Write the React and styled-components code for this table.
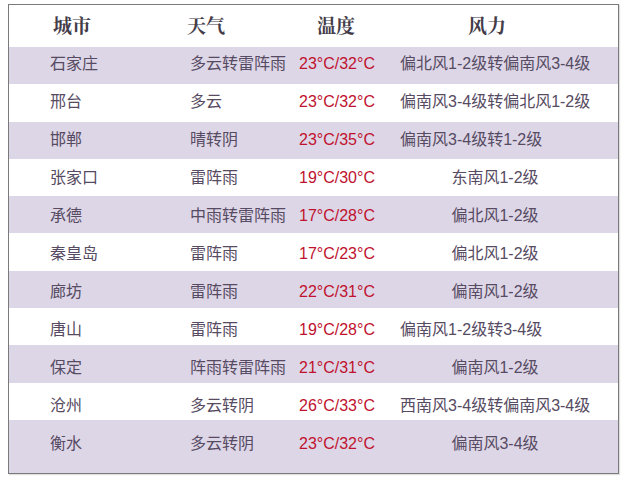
import React from 'react';
import styled, { createGlobalStyle } from 'styled-components';

// wind text is left-aligned when long, centred when short (as in the source sheet)
const rows = [
  ['石家庄', '多云转雷阵雨', '23°C/32°C', '偏北风1-2级转偏南风3-4级', true],
  ['邢台', '多云', '23°C/32°C', '偏南风3-4级转偏北风1-2级', true],
  ['邯郸', '晴转阴', '23°C/35°C', '偏南风3-4级转1-2级', true],
  ['张家口', '雷阵雨', '19°C/30°C', '东南风1-2级'],
  ['承德', '中雨转雷阵雨', '17°C/28°C', '偏北风1-2级'],
  ['秦皇岛', '雷阵雨', '17°C/23°C', '偏北风1-2级'],
  ['廊坊', '雷阵雨', '22°C/31°C', '偏南风1-2级'],
  ['唐山', '雷阵雨', '19°C/28°C', '偏南风1-2级转3-4级', true],
  ['保定', '阵雨转雷阵雨', '21°C/31°C', '偏南风1-2级'],
  ['沧州', '多云转阴', '26°C/33°C', '西南风3-4级转偏南风3-4级', true],
  ['衡水', '多云转阴', '23°C/32°C', '偏南风3-4级'],
];

const GlobalStyle = createGlobalStyle`
  html, body {
    margin: 0;
    padding: 0;
    background: #fff;
  }
  body {
    font-family: "Liberation Sans", "Noto Sans CJK SC", sans-serif;
  }
`;

const Page = styled.div`
  padding: 4px 7px 6px 8px;
`;

const Table = styled.div`
  border: 1px solid #7a7a7a;
  display: grid;
  grid-template-columns: 181px 109px 100px 1fr;
  box-shadow: 1px 1px 1px rgba(0, 0, 0, 0.12);
`;

const Row = styled.div`
  display: contents;
`;

// the text in the sheet drifts slightly lower in each row, so the top
// padding is passed in per row
const Cell = styled.div`
  height: ${(p) => (p.last ? '53px' : '37.3px')};
  padding-top: ${(p) => p.top}px;
  box-sizing: border-box;
  display: flex;
  align-items: flex-start;
  justify-content: ${(p) => (p.center ? 'center' : 'flex-start')};
  padding-left: ${(p) => p.indent || '0'};
  padding-right: ${(p) => p.pr || '0'};
  background: ${(p) => (p.stripe ? '#ddd6e7' : '#fff')};
  color: #564b62;
  font-size: 16px;
  line-height: 20px;
  white-space: nowrap;
`;

const HeadCell = styled.div`
  height: 42px;
  box-sizing: border-box;
  display: flex;
  align-items: center;
  justify-content: ${(p) => (p.center ? 'center' : 'flex-start')};
  padding: 0 ${(p) => p.pr || '0'} 4px ${(p) => p.indent || '0'};
  background: #fff;
  font-family: "Noto Serif CJK SC", "Noto Sans CJK SC", serif;
  font-weight: 700;
  font-size: 19px;
  color: #443c48;
`;

const HeadLabel = styled.span`
  margin-left: ${(p) => p.shift || 0}px;
`;

const Temp = styled.span`
  color: #c0122e;
`;

const App = () => {
  return (
    <Page>
      <GlobalStyle />
      <Table>
        <Row>
          <HeadCell indent="44px">城市</HeadCell>
          <HeadCell>
            <HeadLabel shift={-3}>天气</HeadLabel>
          </HeadCell>
          <HeadCell indent="18px">温度</HeadCell>
          <HeadCell center pr="43px">风力</HeadCell>
        </Row>
        {rows.map(([city, weather, temp, wind, long], i) => {
          const stripe = i % 2 === 0;
          const last = i === rows.length - 1;
          const top = 7 + 0.75 * i;
          const cell = { stripe, last, top };
          return (
            <Row key={city}>
              <Cell {...cell} indent="41px">{city}</Cell>
              <Cell {...cell}>{weather}</Cell>
              <Cell {...cell}>
                <Temp>{temp}</Temp>
              </Cell>
              {long ? (
                <Cell {...cell} indent="1px">{wind}</Cell>
              ) : (
                <Cell {...cell} center pr="27px">{wind}</Cell>
              )}
            </Row>
          );
        })}
      </Table>
    </Page>
  );
};

export default App;
